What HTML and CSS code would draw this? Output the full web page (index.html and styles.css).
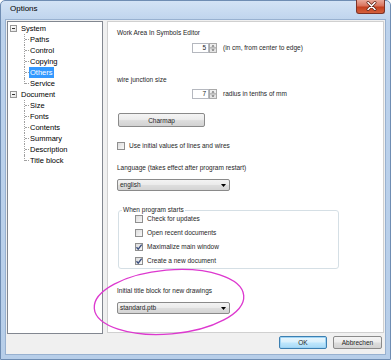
FILE: index.html
```html
<!DOCTYPE html>
<html lang="en">
<head>
    <meta charset="UTF-8">
    <title>Options</title>
    <link rel="stylesheet" href="styles.css">
</head>
<body>
    <div class="window">
        <!-- Title bar -->
        <div class="titlebar">
            <span class="title">Options</span>
            <button class="close-button">
                <svg width="29" height="14" viewBox="0 0 29 14">
                    <path d="M11 3.5 L18 10.5 M18 3.5 L11 10.5" stroke="#5a1f14" stroke-width="3" stroke-linecap="round"/>
                    <path d="M11 3.5 L18 10.5 M18 3.5 L11 10.5" stroke="#ffffff" stroke-width="1.6" stroke-linecap="round"/>
                </svg>
            </button>
        </div>

        <div class="client">
            <div class="panes">
                <!-- Category tree -->
                <ul class="tree">
                    <li>
                        <div class="node"><span class="expander"></span>System</div>
                        <ul class="children">
                            <li>Paths</li>
                            <li>Control</li>
                            <li>Copying</li>
                            <li><span class="selected">Others</span></li>
                            <li>Service</li>
                        </ul>
                    </li>
                    <li>
                        <div class="node"><span class="expander"></span>Document</div>
                        <ul class="children">
                            <li>Size</li>
                            <li>Fonts</li>
                            <li>Contents</li>
                            <li>Summary</li>
                            <li>Description</li>
                            <li>Title block</li>
                        </ul>
                    </li>
                </ul>

                <!-- Settings page -->
                <div class="page">
                    <div class="label">Work Area In Symbols Editor</div>
                    <div class="spin-row first-spin">
                        <span class="spin-box">5</span>
                        <span class="spin-buttons">
                            <svg width="8" height="10" viewBox="0 0 8 10">
                                <rect x="0.5" y="0.5" width="7" height="4.5" fill="#eeeeee" stroke="#a9a9a9"/>
                                <rect x="0.5" y="5" width="7" height="4.5" fill="#e4e4e4" stroke="#a9a9a9"/>
                                <path d="M2.5 3.5 L4 2 L5.5 3.5 Z" fill="#4d4d4d"/>
                                <path d="M2.5 6.5 L4 8 L5.5 6.5 Z" fill="#4d4d4d"/>
                            </svg>
                        </span>
                        <span class="spin-text">(in cm, from center to edge)</span>
                    </div>

                    <div class="label junction">wire junction size</div>
                    <div class="spin-row second-spin">
                        <span class="spin-box">7</span>
                        <span class="spin-buttons">
                            <svg width="8" height="10" viewBox="0 0 8 10">
                                <rect x="0.5" y="0.5" width="7" height="4.5" fill="#eeeeee" stroke="#a9a9a9"/>
                                <rect x="0.5" y="5" width="7" height="4.5" fill="#e4e4e4" stroke="#a9a9a9"/>
                                <path d="M2.5 3.5 L4 2 L5.5 3.5 Z" fill="#4d4d4d"/>
                                <path d="M2.5 6.5 L4 8 L5.5 6.5 Z" fill="#4d4d4d"/>
                            </svg>
                        </span>
                        <span class="spin-text">radius in tenths of mm</span>
                    </div>

                    <button class="charmap-button">Charmap</button>

                    <div class="check-row initial-values">
                        <span class="checkbox"></span>Use initial values of lines and wires
                    </div>

                    <div class="label language">Language (takes effect after program restart)</div>
                    <div class="combo">
                        <span>english</span>
                        <svg width="5" height="3" viewBox="0 0 5 3"><path d="M0 0 H5 L2.5 3 Z" fill="#000"/></svg>
                    </div>

                    <fieldset class="group">
                        <legend>When program starts</legend>
                        <div class="check-row"><span class="checkbox"></span>Check for updates</div>
                        <div class="check-row"><span class="checkbox"></span>Open recent documents</div>
                        <div class="check-row">
                            <span class="checkbox">
                                <svg width="8" height="8" viewBox="0 0 8 8"><path d="M1.5 4.3 L3.2 6.2 L6.7 1.6" fill="none" stroke="#3b4f7e" stroke-width="1.4"/></svg>
                            </span>Maximalize main window
                        </div>
                        <div class="check-row">
                            <span class="checkbox">
                                <svg width="8" height="8" viewBox="0 0 8 8"><path d="M1.5 4.3 L3.2 6.2 L6.7 1.6" fill="none" stroke="#3b4f7e" stroke-width="1.4"/></svg>
                            </span>Create a new document
                        </div>
                    </fieldset>

                    <div class="label title-block">Initial title block for new drawings</div>
                    <div class="combo">
                        <span>standard.ptb</span>
                        <svg width="5" height="3" viewBox="0 0 5 3"><path d="M0 0 H5 L2.5 3 Z" fill="#000"/></svg>
                    </div>
                </div>
            </div>

            <!-- Dialog buttons -->
            <div class="footer">
                <button class="dialog-button default-button">OK</button>
                <button class="dialog-button">Abbrechen</button>
            </div>
        </div>

        <!-- Hand-drawn highlight around the title block setting -->
        <svg class="annotation" width="164" height="76" viewBox="0 0 164 76">
            <ellipse cx="81" cy="37" rx="75" ry="32" transform="rotate(-5 81 37)" fill="none" stroke="#dd38cf" stroke-width="1.3"/>
        </svg>
    </div>
</body>
</html>
```

FILE: styles.css
```css
body {
    margin: 0;
    font-family: "Liberation Sans", Arial, sans-serif;
    color: #000;
}

/* Window frame */
.window {
    position: relative;
    width: 391px;
    height: 360px;
    box-sizing: border-box;
    padding: 0 5px 5px;
    border: 1px solid #6f8db3;
    border-radius: 5px 5px 0 0;
    background: linear-gradient(180deg, #d3e3f5 0%, #bcd2ec 6%, #b7cee9 100%);
}

.titlebar {
    display: flex;
    align-items: flex-start;
    height: 19px;
}
.title {
    padding: 3px 0 0 4px;
    font-size: 8px;
    line-height: 10px;
}
.close-button {
    display: block;
    width: 29px;
    height: 14px;
    padding: 0;
    margin: -1px 0 0 auto;
    border: 1px solid #7d3326;
    border-top: none;
    border-radius: 0 0 3px 3px;
    background: linear-gradient(180deg, #e9a99a 0%, #d9735c 45%, #c4401f 55%, #d4603c 100%);
}
.close-button svg {
    display: block;
    margin-top: -1px;
}

.client {
    height: 334px;
    background-color: #f0f0f0;
    box-shadow: 0 0 0 1px #98b1d0;
}

.panes {
    display: flex;
    gap: 4px;
    padding: 1px 1px 0 1px;
    height: 312px;
}

/* Tree */
.tree {
    width: 96px;
    height: 313px;
    box-sizing: border-box;
    margin: 0;
    padding: 1px 0 0 2px;
    list-style: none;
    background-color: #fff;
    border: 1px solid #828790;
    font-size: 7.5px;
    line-height: 11px;
}
.node {
    display: flex;
    align-items: center;
    gap: 4px;
}
.expander {
    position: relative;
    width: 7px;
    height: 7px;
    box-sizing: border-box;
    border: 1px solid #979797;
    background: linear-gradient(135deg, #ffffff, #e3e3e3);
}
.expander::after {
    content: "";
    position: absolute;
    left: 1px;
    top: 2px;
    width: 3px;
    height: 1px;
    background-color: #333;
}
.children {
    margin: 0 0 0 14px;
    padding: 0;
    list-style: none;
}
.children li {
    position: relative;
    padding-left: 6px;
}
.children li::before {
    content: "";
    position: absolute;
    left: 0;
    top: 0;
    bottom: 0;
    border-left: 1px dotted #a0a0a0;
}
.children li:last-child::before {
    bottom: 5px;
}
.children li::after {
    content: "";
    position: absolute;
    left: 1px;
    top: 5px;
    width: 4px;
    border-top: 1px dotted #a0a0a0;
}
.selected {
    display: inline-block;
    margin-left: -1px;
    padding: 0 1px;
    background-color: #3399ff;
    color: #fff;
}

/* Settings page */
.page {
    flex: 1;
    box-sizing: border-box;
    height: 312px;
    padding: 6px 9px 0;
    background-color: #fff;
    border: 1px solid #d0d0d0;
    font-size: 6.5px;
    line-height: 10px;
    color: #1e1e1e;
}
.label {
    height: 10px;
}
.junction {
    margin-top: 22px;
}
.language {
    margin-top: 12px;
}
.title-block {
    margin-top: 17px;
}

.spin-row {
    display: flex;
    align-items: center;
    height: 10px;
    padding-left: 75px;
}
.first-spin {
    margin-top: 5px;
}
.second-spin {
    margin-top: 4px;
}
.spin-box {
    width: 17px;
    height: 10px;
    box-sizing: border-box;
    padding-right: 2px;
    border: 1px solid #b5b8bf;
    text-align: right;
    line-height: 8px;
    background-color: #fff;
}
.spin-buttons svg {
    display: block;
}
.spin-text {
    margin-left: 6px;
}

.charmap-button {
    display: block;
    width: 87px;
    height: 14px;
    margin: 14px 0 0 1px;
    padding: 0;
    border: 1px solid #8a8a8a;
    border-radius: 2px;
    background: linear-gradient(180deg, #f4f4f4 0%, #ececec 45%, #dddddd 55%, #d2d2d2 100%);
    font-family: inherit;
    font-size: 6.5px;
    color: #1e1e1e;
}

.check-row {
    display: flex;
    align-items: center;
    gap: 4px;
    height: 14px;
}
.initial-values {
    height: 10px;
    margin-top: 14px;
}
.checkbox {
    display: block;
    width: 8px;
    height: 8px;
    box-sizing: border-box;
    border: 1px solid #8f8f8f;
    background: linear-gradient(135deg, #dcdcdc, #f8f8f8);
}
.checkbox svg {
    display: block;
    margin: -1px 0 0 -1px;
}

.combo {
    display: flex;
    align-items: center;
    justify-content: space-between;
    width: 113px;
    height: 12px;
    box-sizing: border-box;
    margin-top: 6px;
    padding: 0 3px 0 2px;
    border: 1px solid #8a8a8a;
    border-radius: 2px;
    background: linear-gradient(180deg, #f3f3f3 0%, #ebebeb 45%, #dddddd 55%, #d4d4d4 100%);
}

.group {
    width: 221px;
    box-sizing: border-box;
    margin: 17px 0 0 1px;
    padding: 0 0 0 16px;
    border: 1px solid #d5dfe5;
    border-radius: 3px;
}
.group legend {
    margin-left: -13px;
    padding: 0 1px;
    line-height: 4px;
}

/* Footer with dialog buttons */
.footer {
    display: flex;
    justify-content: flex-end;
    gap: 6px;
    padding: 3px 3px 0 0;
}
.dialog-button {
    width: 49px;
    height: 13px;
    padding: 0;
    border: 1px solid #8a8a8a;
    border-radius: 2px;
    background: linear-gradient(180deg, #f4f4f4 0%, #ececec 45%, #dddddd 55%, #d2d2d2 100%);
    font-family: inherit;
    font-size: 6.5px;
    color: #1e1e1e;
}
.default-button {
    width: 48px;
    border-color: #3c7fb1;
    box-shadow: inset 0 0 0 1px #9fd4f5;
    background: linear-gradient(180deg, #eaf6fd 0%, #d9f0fc 45%, #bee6fd 55%, #a7d9f5 100%);
}

.annotation {
    position: absolute;
    left: 87px;
    top: 264px;
}
```
